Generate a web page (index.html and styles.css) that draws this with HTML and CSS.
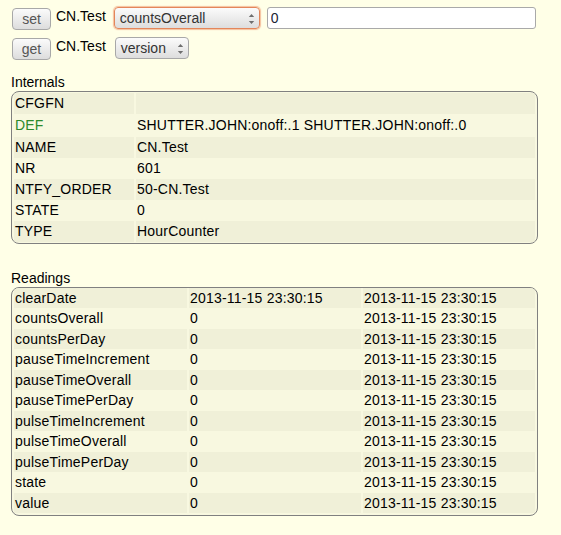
FILE: index.html
```html
<!DOCTYPE html>
<html>
<head>
<meta charset="utf-8">
<title>CN.Test</title>
<link rel="stylesheet" href="styles.css">
</head>
<body>
<div class="page">
  <div class="cmd">
    <button class="btn">set</button>
    <div class="dev">CN.Test</div>
    <div class="sel sel-wide sel-focus">
      <span>countsOverall</span>
      <svg class="arrows" viewBox="0 0 7 12" width="7" height="12"><polygon points="0.8,4 3.5,1 6.2,4" fill="#6e6e6e"/><polygon points="0.8,8 3.5,11 6.2,8" fill="#6e6e6e"/></svg>
    </div>
    <input class="inp" type="text" value="0">
  </div>
  <div class="cmd">
    <button class="btn">get</button>
    <div class="dev">CN.Test</div>
    <div class="sel sel-narrow">
      <span>version</span>
      <svg class="arrows" viewBox="0 0 7 12" width="7" height="12"><polygon points="0.8,4 3.5,1 6.2,4" fill="#6e6e6e"/><polygon points="0.8,8 3.5,11 6.2,8" fill="#6e6e6e"/></svg>
    </div>
  </div>

  <div class="label label-int">Internals</div>
  <div class="block block-int">
    <table>
      <tr class="odd"><td class="ic1">CFGFN</td><td></td></tr>
      <tr class="defrow"><td class="ic1 def">DEF</td><td>SHUTTER.JOHN:onoff:.1 SHUTTER.JOHN:onoff:.0</td></tr>
      <tr class="odd"><td class="ic1">NAME</td><td>CN.Test</td></tr>
      <tr><td class="ic1">NR</td><td>601</td></tr>
      <tr class="odd"><td class="ic1">NTFY_ORDER</td><td>50-CN.Test</td></tr>
      <tr><td class="ic1">STATE</td><td>0</td></tr>
      <tr class="odd"><td class="ic1">TYPE</td><td>HourCounter</td></tr>
    </table>
  </div>

  <div class="label label-read">Readings</div>
  <div class="block block-read">
    <table>
      <tr class="odd"><td class="rc1">clearDate</td><td class="rc2">2013-11-15 23:30:15</td><td class="rc3">2013-11-15 23:30:15</td></tr>
      <tr><td class="rc1">countsOverall</td><td class="rc2">0</td><td class="rc3">2013-11-15 23:30:15</td></tr>
      <tr class="odd"><td class="rc1">countsPerDay</td><td class="rc2">0</td><td class="rc3">2013-11-15 23:30:15</td></tr>
      <tr><td class="rc1">pauseTimeIncrement</td><td class="rc2">0</td><td class="rc3">2013-11-15 23:30:15</td></tr>
      <tr class="odd"><td class="rc1">pauseTimeOverall</td><td class="rc2">0</td><td class="rc3">2013-11-15 23:30:15</td></tr>
      <tr><td class="rc1">pauseTimePerDay</td><td class="rc2">0</td><td class="rc3">2013-11-15 23:30:15</td></tr>
      <tr class="odd"><td class="rc1">pulseTimeIncrement</td><td class="rc2">0</td><td class="rc3">2013-11-15 23:30:15</td></tr>
      <tr><td class="rc1">pulseTimeOverall</td><td class="rc2">0</td><td class="rc3">2013-11-15 23:30:15</td></tr>
      <tr class="odd"><td class="rc1">pulseTimePerDay</td><td class="rc2">0</td><td class="rc3">2013-11-15 23:30:15</td></tr>
      <tr><td class="rc1">state</td><td class="rc2">0</td><td class="rc3">2013-11-15 23:30:15</td></tr>
      <tr class="odd"><td class="rc1">value</td><td class="rc2">0</td><td class="rc3">2013-11-15 23:30:15</td></tr>
    </table>
  </div>
</div>
</body>
</html>
```

FILE: styles.css
```css
* { box-sizing: border-box; }
html, body {
  margin: 0;
  padding: 0;
  background: #FFFFE7;
}
body {
  font-family: "Liberation Sans", Arial, sans-serif;
  font-size: 14px;
  color: #000;
}
.page {
  width: 561px;
  padding: 7px 0 0 11px;
}
.cmd {
  display: flex;
  align-items: flex-start;
  height: 23px;
  margin-left: 1px;
}
.cmd + .cmd { margin-top: 7px; }

.btn {
  width: 39px;
  height: 22px;
  margin: 0.5px 0 0 0;
  padding: 0;
  border: 1px solid #a8a8a8;
  border-radius: 4px;
  background: linear-gradient(#fbfbfb, #dddddd);
  color: #555;
  font-family: "Liberation Sans", Arial, sans-serif;
  font-size: 14px;
  line-height: 20px;
  text-align: center;
}
.dev {
  margin-left: 5px;
  padding-top: 1px;
  line-height: 17px;
}
.sel {
  display: flex;
  align-items: center;
  justify-content: space-between;
  height: 22px;
  margin-left: 8px;
  padding: 0 4px 0 5px;
  border: 1px solid #a8a8a8;
  border-radius: 4px;
  background: linear-gradient(#fbfbfb, #dddddd);
  color: #333;
  line-height: 20px;
}
.sel-wide { width: 146px; }
.sel-narrow { width: 74px; margin-left: 9px; }
.sel-focus {
  border-color: #e3865b;
  box-shadow: 0 0 1px 1px rgba(236, 140, 96, 0.55);
}
.arrows {
  display: block;
  margin-top: 2px;
}
.inp {
  width: 269px;
  height: 22px;
  margin: 0 0 0 7px;
  padding: 0 0 0 3px;
  border: 1px solid #a9a9a9;
  border-radius: 3px;
  background: #fff;
  color: #1c2433;
  font-family: "Liberation Sans", Arial, sans-serif;
  font-size: 14px;
  outline: none;
}

.label { line-height: 17px; }
.label-int { margin-top: 14px; }
.label-read { margin-top: 26px; }

.block {
  width: 527px;
  border: 1px solid #808080;
  border-radius: 8px;
  background: #F8F8E0;
  overflow: hidden;
}
.block-int { padding: 1px 0 1px 0; }
.block-read { padding: 0 0 1.5px 0; }

table {
  width: 100%;
  border-collapse: separate;
  border-spacing: 2px 0;
  font-size: 14px;
  letter-spacing: 0.2px;
}
td {
  padding: 2px 1px;
  line-height: 17px;
  text-align: left;
  vertical-align: top;
  white-space: nowrap;
}
tr.defrow td { padding-top: 2.5px; padding-bottom: 3px; }
.block-read td { line-height: 16.5px; }
tr.odd td { background: #F0F0D8; }

.ic1 { width: 120px; }
.def { color: #2c8a2c; }
.rc1 { width: 173px; }
.rc2 { width: 172px; }
.rc3 { width: 172px; }
```
